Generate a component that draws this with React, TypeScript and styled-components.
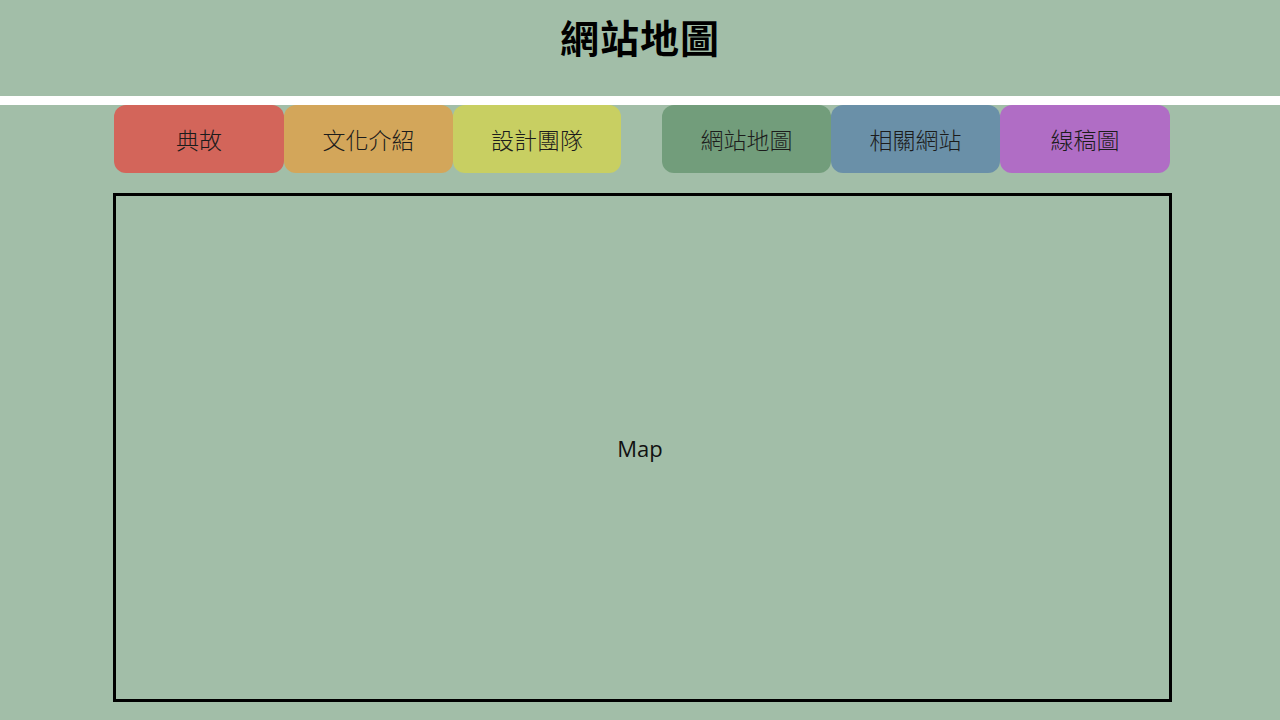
import React from "react";
import styled, { createGlobalStyle } from "styled-components";

const GlobalStyle = createGlobalStyle`
  html, body {
    margin: 0;
    padding: 0;
    background: #a2bea8;
  }
  body {
    font-family: "Noto Sans CJK TC", "Noto Sans", sans-serif;
    width: 1280px;
    height: 720px;
    overflow: hidden;
  }
`;

const Page = styled.div`
  width: 1280px;
  height: 720px;
  background: #a2bea8;
  display: flex;
  flex-direction: column;
`;

const Header = styled.header`
  height: 96px;
  box-sizing: border-box;
  padding-top: 16px;
  display: flex;
  justify-content: center;
`;

const Title = styled.h1`
  margin: 0;
  font-family: "Noto Sans CJK TC", sans-serif;
  font-weight: 700;
  font-size: 39px;
  line-height: 40px;
  letter-spacing: 1px;
  color: #000;
`;

const Divider = styled.div`
  height: 9px;
  background: #ffffff;
`;

const Content = styled.main`
  width: 1059px;
  margin-left: 113px;
  display: flex;
  flex-direction: column;
  gap: 20px;
`;

const NavRow = styled.nav`
  display: flex;
  padding: 0 1px;
  gap: 41px;
`;

const NavGroup = styled.div`
  display: flex;
`;

const NavButton = styled.a<{ $bg: string; $w: number }>`
  width: ${(p) => p.$w}px;
  height: 68px;
  border-radius: 12px;
  background: ${(p) => p.$bg};
  display: flex;
  align-items: center;
  justify-content: center;
  font-family: "Noto Sans CJK TC", sans-serif;
  font-weight: 300;
  font-size: 23px;
  color: #1c1c1c;
  text-decoration: none;
  cursor: pointer;
`;

const MapBox = styled.section`
  height: 509px;
  box-sizing: border-box;
  border: 3px solid #000;
  padding-right: 5px;
  display: flex;
  align-items: center;
  justify-content: center;
`;

const MapLabel = styled.span`
  font-family: "Open Sans", "Liberation Sans", sans-serif;
  font-size: 22px;
  color: #111;
`;

const left = [
  { label: "典故", bg: "#d3655a", w: 170 },
  { label: "文化介紹", bg: "#d3a65a", w: 169 },
  { label: "設計團隊", bg: "#c8cf62", w: 168 },
];

const right = [
  { label: "網站地圖", bg: "#729d7b", w: 169 },
  { label: "相關網站", bg: "#6a90a8", w: 169 },
  { label: "線稿圖", bg: "#b06dc5", w: 170 },
];

export default function App() {
  return (
    <Page>
      <GlobalStyle />
      <Header>
        <Title>網站地圖</Title>
      </Header>
      <Divider />
      <Content>
        <NavRow>
          <NavGroup>
            {left.map((b) => (
              <NavButton key={b.label} $bg={b.bg} $w={b.w}>
                {b.label}
              </NavButton>
            ))}
          </NavGroup>
          <NavGroup>
            {right.map((b) => (
              <NavButton key={b.label} $bg={b.bg} $w={b.w}>
                {b.label}
              </NavButton>
            ))}
          </NavGroup>
        </NavRow>
        <MapBox>
          <MapLabel>Map</MapLabel>
        </MapBox>
      </Content>
    </Page>
  );
}
